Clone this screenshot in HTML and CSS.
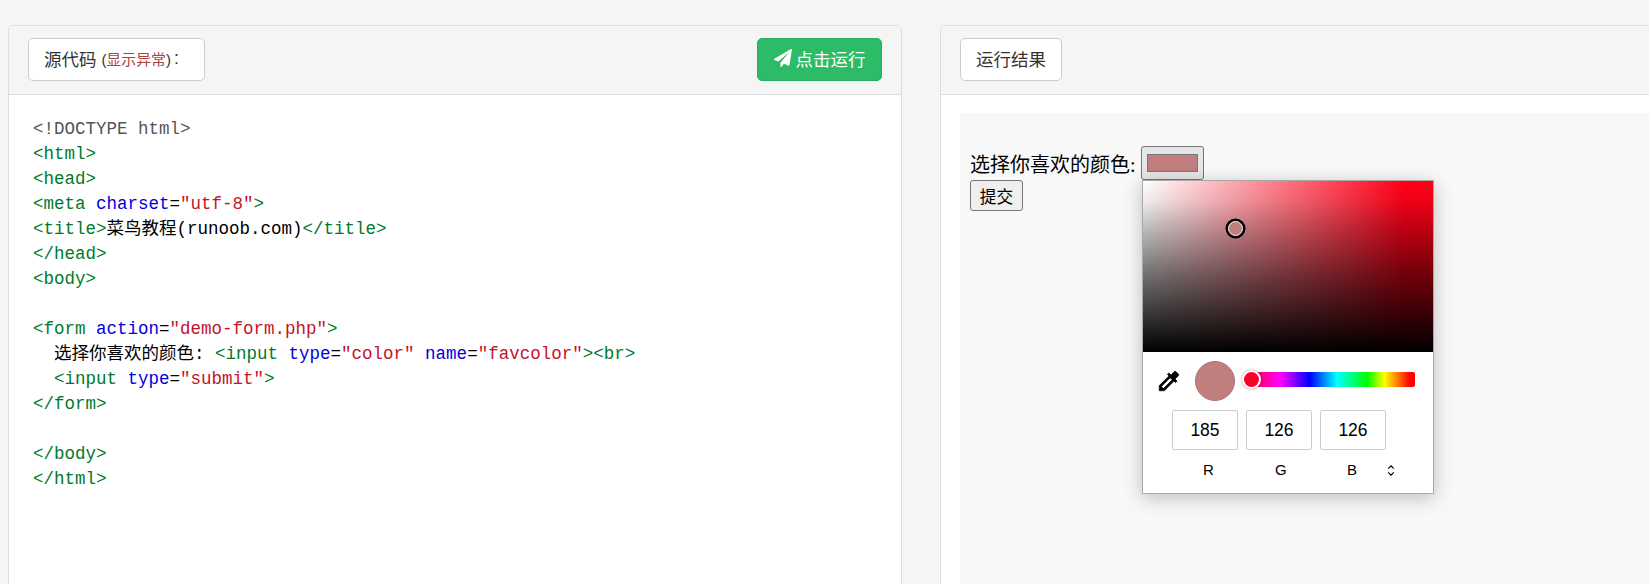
FILE: index.html
```html
<!DOCTYPE html>
<html lang="zh">
<head>
<meta charset="utf-8">
<title>运行结果</title>
<link rel="stylesheet" href="styles.css">
</head>
<body>
<main class="layout">
  <section class="panel panel-source">
    <header class="panel-head">
      <div class="label">源代码 <small>(<span class="warn">显示异常</span>)</small>:</div>
      <button class="run" type="button"><svg class="send" viewBox="0 0 1792 1792"><path d="M1764 11q33 24 27 64l-256 1536q-5 29-32 45-14 8-31 8-11 0-24-5l-453-185-242 295q-18 23-49 23-13 0-22-4-19-7-30.5-23.5t-11.5-36.5v-349l864-1059-1069 925-395-162q-37-14-40-55-2-40 32-59l1664-960q15-9 32-9 20 0 36 11z"/></svg>点击运行</button>
    </header>
    <pre class="code"><span class="m">&lt;!DOCTYPE html&gt;</span>
<span class="t">&lt;html&gt;</span>
<span class="t">&lt;head&gt;</span>
<span class="t">&lt;meta</span> <span class="a">charset</span>=<span class="s">"utf-8"</span><span class="t">&gt;</span>
<span class="t">&lt;title&gt;</span>菜鸟教程(runoob.com)<span class="t">&lt;/title&gt;</span>
<span class="t">&lt;/head&gt;</span>
<span class="t">&lt;body&gt;</span>

<span class="t">&lt;form</span> <span class="a">action</span>=<span class="s">"demo-form.php"</span><span class="t">&gt;</span>
  选择你喜欢的颜色: <span class="t">&lt;input</span> <span class="a">type</span>=<span class="s">"color"</span> <span class="a">name</span>=<span class="s">"favcolor"</span><span class="t">&gt;&lt;br&gt;</span>
  <span class="t">&lt;input</span> <span class="a">type</span>=<span class="s">"submit"</span><span class="t">&gt;</span>
<span class="t">&lt;/form&gt;</span>

<span class="t">&lt;/body&gt;</span>
<span class="t">&lt;/html&gt;</span></pre>
  </section>
  <section class="panel panel-result">
    <header class="panel-head">
      <div class="label">运行结果</div>
    </header>
    <div class="result-body">
      <form class="demo" onsubmit="return false">
        选择你喜欢的颜色: <input class="color" type="color" value="#c07e7e"><br>
        <input class="submit" type="submit" value="提交">
      </form>
    </div>
  </section>
</main>
<div class="picker">
  <div class="field"><span class="marker"></span></div>
  <div class="controls">
    <svg class="dropper" viewBox="0 0 24 24"><path d="M20.71 5.63l-2.34-2.34c-.39-.39-1.02-.39-1.41 0l-3.12 3.12-1.93-1.91-1.41 1.41 1.42 1.42L3 16.25V21h4.75l8.92-8.92 1.42 1.42 1.41-1.41-1.92-1.92 3.12-3.12c.4-.4.4-1.03.01-1.42zM6.92 19L5 17.08l8.06-8.06 1.92 1.92L6.92 19z"/></svg>
    <span class="swatch"></span>
    <div class="hue"><span class="thumb"></span></div>
  </div>
  <div class="values">
    <span class="val">185</span><span class="val">126</span><span class="val">126</span>
  </div>
  <div class="names">
    <span>R</span><span>G</span><span>B</span>
    <svg class="toggle" viewBox="0 0 10 14"><path d="M2 5l3-3 3 3M2 9l3 3 3-3"/></svg>
  </div>
</div>
</body>
</html>
```
FILE: styles.css
```css
* { box-sizing: border-box; }
html, body { height: 100%; }
body {
  margin: 0;
  background: #f5f5f5;
  overflow: hidden;
  font-family: "Liberation Sans", "Noto Sans CJK SC", sans-serif;
  font-size: 17.5px;
  color: #333;
}
.layout {
  display: flex;
  gap: 38px;
  padding: 25px 0 0 8px;
  width: 1850px;
  height: 640px;
}
.panel {
  flex: none;
  background: #fff;
  border: 1px solid #ddd;
  border-radius: 5px;
  height: 100%;
}
.panel-source { width: 894px; }
.panel-result { width: 880px; }
.panel-head {
  display: flex;
  justify-content: space-between;
  align-items: center;
  height: 69px;
  padding: 0 19px 2px;
  background: #f5f5f5;
  border-bottom: 1px solid #ddd;
  border-radius: 4px 4px 0 0;
}
.label {
  display: flex;
  align-items: center;
  white-space: pre;
  height: 43px;
  padding: 0 15px 2px;
  background: #fff;
  border: 1px solid #ccc;
  border-radius: 5px;
}
.panel-source .label { width: 177px; }
.label small { font-size: 14.9px; margin-right: 3px; }
.warn { color: #a94442; }
.run {
  display: flex;
  align-items: center;
  justify-content: center;
  width: 125px;
  height: 43px;
  padding: 0 0 2px;
  font: inherit;
  color: #fff;
  background: #2dbb67;
  border: 1px solid #27ae60;
  border-radius: 5px;
}
.send { width: 18px; height: 18px; margin-right: 4px; fill: #fff; }
.code {
  margin: 0;
  padding: 22px 24px;
  font-family: "Liberation Mono", "Noto Sans CJK SC", monospace;
  font-size: 17.5px;
  line-height: 25px;
  color: #000;
}
.m { color: #555; }
.t { color: #007a2a; }
.a { color: #0000dd; }
.s { color: #c4122a; }
.result-body {
  margin: 18px 0 0 19px;
  height: 500px;
  background: #f8f8f8;
}
.demo {
  padding: 33px 0 0 10px;
  font-family: "Liberation Serif", "Noto Sans CJK SC", sans-serif;
  font-size: 20px;
  line-height: 1;
  color: #000;
}
.color {
  width: 63px;
  height: 34px;
  padding: 7px 5px;
  margin: 0;
  background: #e6e6e6;
  border: 1px solid #767676;
  border-radius: 3px;
  vertical-align: 0;
}
.color::-webkit-color-swatch-wrapper { padding: 0; }
.color::-webkit-color-swatch { border: 1px solid #777; border-radius: 0; }
.submit {
  width: 53px;
  height: 31px;
  padding: 0;
  margin: 0;
  font-family: "Noto Sans CJK SC", sans-serif;
  font-size: 16.7px;
  color: #000;
  background: #efefef;
  border: 1px solid #767676;
  border-radius: 3px;
}
.picker {
  position: absolute;
  left: 1142px;
  top: 180px;
  width: 292px;
  height: 314px;
  background: #fff;
  border: 1px solid #a8a8a8;
  box-shadow: 0 4px 18px rgba(0, 0, 0, .24);
  font-size: 17.5px;
  color: #000;
}
.field {
  position: relative;
  height: 171px;
  background:
    linear-gradient(to bottom, rgba(0, 0, 0, 0), rgba(0, 0, 0, .07) 12%, rgba(0, 0, 0, .25) 27%, rgba(0, 0, 0, .57) 56%, #000),
    linear-gradient(to right, #fff, #ff0018 90%, #ff0018);
}
.marker {
  position: absolute;
  left: 85px;
  top: 40px;
  width: 15px;
  height: 15px;
  background: #c07e7e;
  border: 1.5px solid #fff;
  border-radius: 50%;
  box-shadow: 0 0 0 2.5px #000;
}
.controls {
  display: flex;
  align-items: center;
  height: 58px;
  padding-left: 13px;
}
.dropper { width: 26px; height: 26px; fill: #000; stroke: #000; stroke-width: .6; }
.swatch {
  flex: none;
  width: 40px;
  height: 40px;
  margin-left: 13px;
  background: #c07e7e;
  border: 1px solid #ad7272;
  border-radius: 50%;
}
.hue {
  position: relative;
  width: 170px;
  height: 15px;
  margin: 0 0 4px 10px;
  border-radius: 2px;
  background: linear-gradient(to right, #ff0026 0, #ff00ff 21%, #0000ff 38%, #00ffff 54%, #00ff00 72%, #ffff00 82%, #ff0000 97%);
}
.thumb {
  position: absolute;
  left: -3px;
  top: -2px;
  width: 19px;
  height: 19px;
  background: #ff0026;
  border: 2px solid #fff;
  border-radius: 50%;
  box-shadow: 0 0 3px rgba(0, 0, 0, .4);
}
.values {
  display: flex;
  gap: 8px;
  padding-left: 29px;
}
.val {
  display: flex;
  align-items: center;
  justify-content: center;
  width: 66px;
  height: 40px;
  border: 1px solid #ccc;
  border-radius: 2px;
}
.names {
  position: relative;
  display: flex;
  margin-top: 10px;
  padding-left: 29px;
  font-size: 15px;
  line-height: 20px;
}
.names span { width: 72px; padding-left: 31px; }
.toggle {
  position: absolute;
  left: 243px;
  top: 4px;
  width: 10px;
  height: 13px;
  fill: none;
  stroke: #000;
  stroke-width: 1.3;
}
```
